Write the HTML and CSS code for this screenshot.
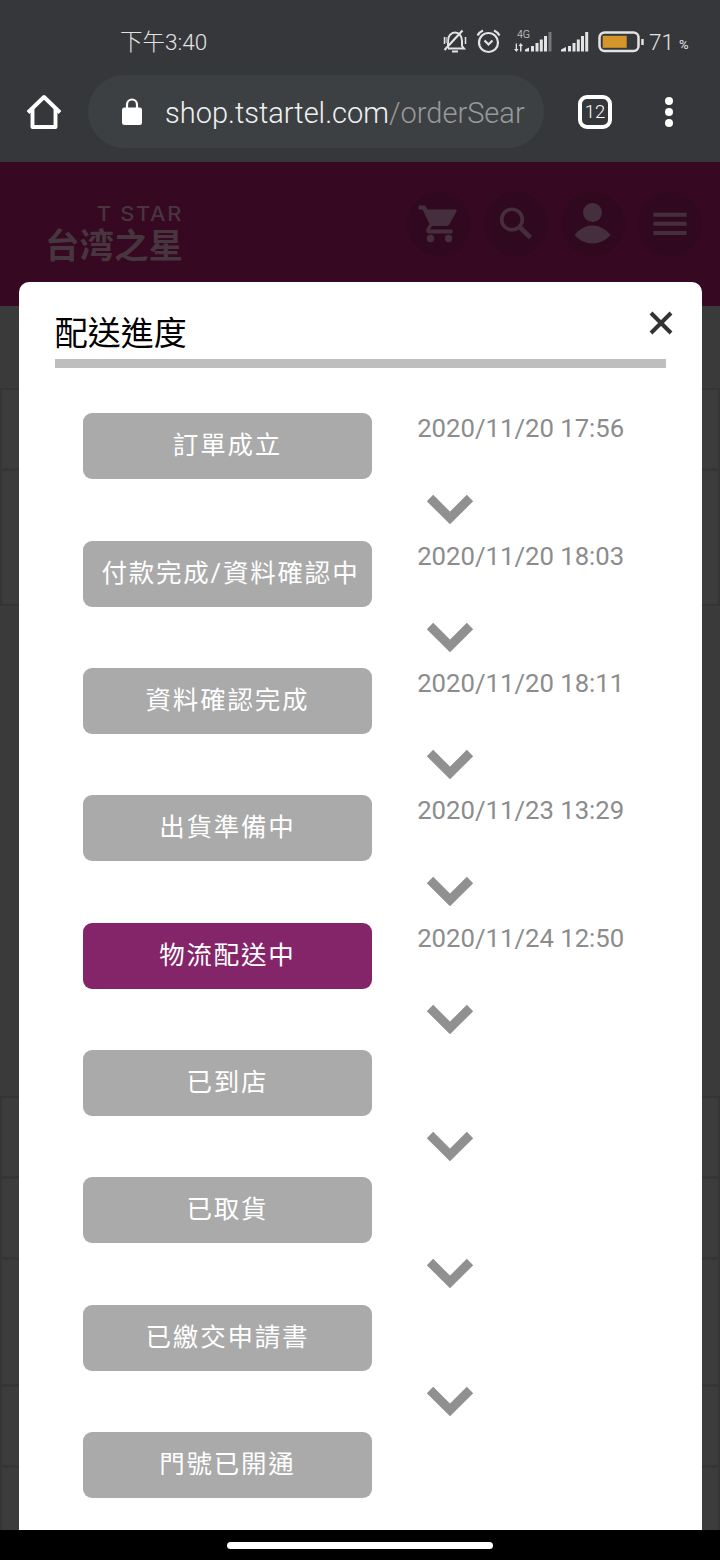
FILE: index.html
```html
<!DOCTYPE html>
<html lang="zh-Hant">
<head>
  <meta charset="UTF-8" />
  <meta name="viewport" content="width=device-width, initial-scale=1.0"/>
  <title>配送進度</title>
  <link rel="stylesheet" href="styles.css">
</head>
<body>

  <!-- Status bar -->
  <div class="status-bar">
    <span class="clock">下午3:40</span>
    <div class="status-icons">
      <svg class="bell" width="24" height="26" viewBox="0 0 24 26" fill="none" stroke="#e3e3e3" stroke-width="2">
        <path d="M5 20V13C5 8 8 4.500 12 4.500S19 8 19 13V18L21 20.500H5"/>
        <path d="M1.500 22L19.500 2.500" stroke-width="2.200"/>
        <path d="M9 23.500H15"/>
        <path d="M1.500 9V16M22.500 9V16" stroke-width="1.500"/>
        <path d="M3.500 9V15" stroke="#999"/>
      </svg>
      <svg class="alarm" width="26" height="26" viewBox="0 0 26 26" fill="none" stroke="#e3e3e3" stroke-width="2.200">
        <circle cx="12.500" cy="14.500" r="9.500"/>
        <path d="M8.500 12.500L12.500 16.500L16.500 12.500"/>
        <path d="M1.500 7.500Q3.500 4 7 2.500M23.500 7.500Q21.500 4 18 2.500"/>
      </svg>
      <div class="network">
        <span class="network-type">4G</span>
        <svg width="38" height="24" viewBox="0 0 38 24" fill="#e3e3e3">
          <path d="M1.700 14.500H3V20H4.500L2.500 23L0 20H1.700ZM6 22.500V17H4.600L6.700 14L9 17H7.500V22.500Z"/>
          <path d="M11 22.500V20.500L15 18.500V22.500ZM17 17H20V22.500H17ZM21.500 14H24.500V22.500H21.500ZM25.800 10.500H28.800V22.500H25.800ZM30 7H33V22.500H30Z"/>
          <path d="M34.500 3H37.500V22.500H34.500Z" fill="#77777a"/>
        </svg>
      </div>
      <svg class="signal" width="28" height="24" viewBox="0 0 28 24" fill="#e3e3e3">
        <path d="M0 22.500V20.500L5 18V22.500ZM7 17H10V22.500H7ZM11.500 14H14.500V22.500H11.500ZM15.800 10.500H18.800V22.500H15.800ZM20 7H23V22.500H20ZM24.200 3H27.200V22.500H24.200Z"/>
      </svg>
      <svg class="battery" width="46" height="22" viewBox="0 0 46 22">
        <rect x="1.500" y="1.500" width="39" height="18.500" rx="5" fill="none" stroke="#e3e3e3" stroke-width="2.500"/>
        <rect x="4.700" y="4.800" width="24" height="12" fill="#d4962a"/>
        <path d="M44.500 8V14" stroke="#e3e3e3" stroke-width="2.500"/>
      </svg>
      <span class="battery-level">71</span>
      <span class="percent">%</span>
    </div>
  </div>

  <!-- Browser toolbar -->
  <div class="toolbar">
    <svg class="home" width="36" height="36" viewBox="0 0 36 36" fill="none" stroke="#fff" stroke-width="3.900" stroke-linejoin="round">
      <path d="M2 18.500L18 3L34 18.500"/>
      <path d="M6.500 15V33H29.500V15"/>
    </svg>
    <div class="address">
      <svg width="20" height="28" viewBox="0 0 20 28">
        <path d="M5 11V6.500A5 5 0 0 1 15 6.500V11" fill="none" stroke="#fff" stroke-width="2.200"/>
        <rect y="9.500" width="20" height="17.500" rx="2.500" fill="#fff"/>
      </svg>
      <span class="url">shop.tstartel.com<span class="path">/orderSear</span></span>
    </div>
    <span class="tabs">12</span>
    <svg class="dots" width="10" height="32" viewBox="0 0 10 32" fill="#fff">
      <circle cx="5" cy="5" r="4"/>
      <circle cx="5" cy="16" r="4"/>
      <circle cx="5" cy="27" r="4"/>
    </svg>
  </div>

  <!-- Dimmed shop page, with the dialog over it -->
  <div class="page">
    <div class="site-header">
      <div class="logo">
        <span class="logo-en">T STAR</span>
        <span class="logo-zh">台湾之星</span>
      </div>
      <div class="site-menu">
        <div class="round">
          <svg width="64" height="64" viewBox="0 0 64 64" fill="#462f3c">
            <path d="M11.500 13.500H18L20.500 17.500H49Q50 18 49.500 19.500L42.500 32Q41.500 34 39.500 34H25L23 37.500H45.500V41.500H21Q18.500 40 19.500 37L22.500 32L15.500 17.500H11.500Z"/>
            <circle cx="23.500" cy="46.500" r="3.700"/>
            <circle cx="41.500" cy="46.500" r="3.700"/>
          </svg>
        </div>
        <div class="round">
          <svg width="64" height="64" viewBox="0 0 64 64" fill="none" stroke="#462f3c">
            <circle cx="28" cy="27.500" r="10.300" stroke-width="3.600"/>
            <path d="M35.500 35L46.500 45.500" stroke-width="4.500"/>
          </svg>
        </div>
        <div class="round">
          <svg width="64" height="64" viewBox="0 0 64 64" fill="#462f3c">
            <circle cx="31.500" cy="20.500" r="9.500"/>
            <path d="M13.500 43Q21 33.500 31.500 33.500T49.500 43Q42 51.500 31.500 51.500T13.500 43Z"/>
          </svg>
        </div>
        <div class="round">
          <svg width="64" height="64" viewBox="0 0 64 64" stroke="#462f3c" stroke-width="4">
            <path d="M15.500 22.700H48.500M15.500 31.800H48.500M15.500 40.900H48.500"/>
          </svg>
        </div>
      </div>
    </div>
    <div class="order-table first">
      <div class="row"></div>
      <div class="row tall"></div>
    </div>
    <div class="order-table second">
      <div class="row"></div>
      <div class="row"></div>
      <div class="row medium"></div>
      <div class="row"></div>
      <div class="row"></div>
    </div>

    <div class="dialog">
      <svg class="close" width="24" height="24" viewBox="0 0 24 24" stroke="#333" stroke-width="4">
        <path d="M2 2L22 22M22 2L2 22"/>
      </svg>
      <h1>配送進度</h1>
      <div class="steps">
        <div class="step">
          <div class="label">訂單成立</div>
          <div class="info">
            <span class="time">2020/11/20 17:56</span>
            <svg class="arrow" viewBox="0 0 48 32"><path d="M4 4L24 24L44 4"/></svg>
          </div>
        </div>
        <div class="step">
          <div class="label long">付款完成/資料確認中</div>
          <div class="info">
            <span class="time">2020/11/20 18:03</span>
            <svg class="arrow" viewBox="0 0 48 32"><path d="M4 4L24 24L44 4"/></svg>
          </div>
        </div>
        <div class="step">
          <div class="label">資料確認完成</div>
          <div class="info">
            <span class="time">2020/11/20 18:11</span>
            <svg class="arrow" viewBox="0 0 48 32"><path d="M4 4L24 24L44 4"/></svg>
          </div>
        </div>
        <div class="step">
          <div class="label">出貨準備中</div>
          <div class="info">
            <span class="time">2020/11/23 13:29</span>
            <svg class="arrow" viewBox="0 0 48 32"><path d="M4 4L24 24L44 4"/></svg>
          </div>
        </div>
        <div class="step">
          <div class="label active">物流配送中</div>
          <div class="info">
            <span class="time">2020/11/24 12:50</span>
            <svg class="arrow" viewBox="0 0 48 32"><path d="M4 4L24 24L44 4"/></svg>
          </div>
        </div>
        <div class="step">
          <div class="label">已到店</div>
          <div class="info">
            <span class="time"></span>
            <svg class="arrow" viewBox="0 0 48 32"><path d="M4 4L24 24L44 4"/></svg>
          </div>
        </div>
        <div class="step">
          <div class="label">已取貨</div>
          <div class="info">
            <span class="time"></span>
            <svg class="arrow" viewBox="0 0 48 32"><path d="M4 4L24 24L44 4"/></svg>
          </div>
        </div>
        <div class="step">
          <div class="label">已繳交申請書</div>
          <div class="info">
            <span class="time"></span>
            <svg class="arrow" viewBox="0 0 48 32"><path d="M4 4L24 24L44 4"/></svg>
          </div>
        </div>
        <div class="step">
          <div class="label">門號已開通</div>
        </div>
      </div>
    </div>
  </div>

  <!-- Gesture bar -->
  <div class="gesture-bar"><div class="handle"></div></div>

</body>
</html>
```
FILE: styles.css
```css
* {
  box-sizing: border-box;
}
body {
  margin: 0;
  width: 720px;
  height: 1560px;
  overflow: hidden;
  display: flex;
  flex-direction: column;
  background-color: #36373b;
  font-family: Roboto, "Noto Sans CJK TC", sans-serif;
}
svg {
  display: block;
  flex: none;
}

/* Status bar */
.status-bar {
  height: 75px;
  padding: 28px 30px 0 120px;
  display: flex;
  justify-content: space-between;
  color: #e3e3e3;
  font-weight: 300;
}
.clock {
  font-size: 22.5px;
  line-height: 28px;
}
.status-icons {
  display: flex;
  align-items: flex-start;
  width: 247px;
}
.alarm {
  margin-left: 9px;
}
.network {
  position: relative;
  margin-left: 12px;
}
.network-type {
  position: absolute;
  left: 3px;
  top: 1px;
  font-size: 10.5px;
  line-height: 12px;
}
.signal {
  margin-left: 9px;
}
.network svg, .signal {
  margin-top: 1px;
}
.battery {
  margin: 3px 0 0 9px;
}
.battery-level {
  margin-left: 5px;
  width: 30px;
  font-size: 22.5px;
  line-height: 28px;
}
.percent {
  font-size: 13px;
  font-weight: 400;
  line-height: 34px;
}

/* Browser toolbar */
.toolbar {
  height: 87px;
  padding: 0 46px 14px 26px;
  display: flex;
  align-items: center;
}
.address {
  width: 456px;
  height: 73px;
  margin-left: 26px;
  padding: 0 14px 0 34px;
  display: flex;
  align-items: center;
  gap: 23px;
  background-color: #3d4043;
  border-radius: 37px;
}
.url {
  flex: 1;
  padding-top: 2px;
  white-space: nowrap;
  color: #f1f1f1;
  font-size: 29px;
  font-weight: 300;
  line-height: 40px;
}
.path {
  color: #98999b;
}
.tabs {
  width: 34px;
  height: 34px;
  margin-left: 34px;
  border: 4px solid #fff;
  border-radius: 9px;
  color: #fff;
  font-size: 18.5px;
  font-weight: 300;
  line-height: 26px;
  text-align: center;
}
.dots {
  margin-left: 52px;
}

/* Dimmed page */
.page {
  position: relative;
  height: 1368px;
  background-color: #3a3a3a;
  overflow: hidden;
}
.site-header {
  height: 144px;
  padding: 30px 18px 0 45px;
  display: flex;
  justify-content: space-between;
  background-color: #360821;
}
.logo {
  width: 138px;
  display: flex;
  flex-direction: column;
  align-items: flex-end;
  color: #48363f;
  padding-top: 12px;
}
.logo-en {
  font-family: Inter, sans-serif;
  font-size: 19.5px;
  font-weight: 500;
  line-height: 21px;
  letter-spacing: 1.500px;
  transform: scaleX(1.12);
  transform-origin: right;
}
.logo-zh {
  font-size: 34.5px;
  font-weight: 700;
  line-height: 42px;
}
.site-menu {
  display: flex;
  gap: 13px;
}
.round {
  width: 64px;
  height: 64px;
  border-radius: 50%;
  background-color: #300920;
}
.order-table {
  border: 2px solid #353535;
  background-color: #3c3c3c;
}
.first {
  margin-top: 82px;
}
.second {
  margin-top: 490px;
}
.row {
  height: 81px;
  border-bottom: 3px solid #363636;
}
.tall {
  height: 133px;
  border-bottom: 0;
}
.medium {
  height: 127px;
}

/* Delivery dialog */
.dialog {
  position: absolute;
  left: 18.700px;
  top: 120px;
  width: 683.700px;
  height: 1248px;
  padding: 30px 36px 0;
  background-color: #fff;
  border-radius: 10px 10px 0 0;
}
.close {
  position: absolute;
  right: 29px;
  top: 29px;
}
h1 {
  margin: 0;
  height: 56px;
  border-bottom: 9px solid #bebebe;
  color: #000;
  font-size: 33px;
  font-weight: 400;
  line-height: 44px;
}
.steps {
  padding: 45.300px 0 0 28px;
}
.step {
  display: flex;
  gap: 45px;
  height: 127.370px;
}
.label {
  width: 289.500px;
  height: 66px;
  border-radius: 9px;
  background-color: #aaa;
  color: #fff;
  font-size: 25.5px;
  line-height: 64px;
  letter-spacing: 1.800px;
  text-align: center;
}
.long {
  padding-left: 6px;
}
.active {
  background-color: #842569;
}
.time {
  display: block;
  height: 81px;
  color: #8c8c8c;
  font-size: 25.700px;
  line-height: 30px;
}
.arrow {
  width: 48px;
  height: 32px;
  margin-left: 8.500px;
  fill: none;
  stroke: #909090;
  stroke-width: 9;
}

/* Gesture bar */
.gesture-bar {
  height: 30px;
  padding-top: 12px;
  background-color: #000;
}
.handle {
  width: 266px;
  height: 7px;
  margin: 0 auto;
  border-radius: 4px;
  background-color: #fff;
}
```
